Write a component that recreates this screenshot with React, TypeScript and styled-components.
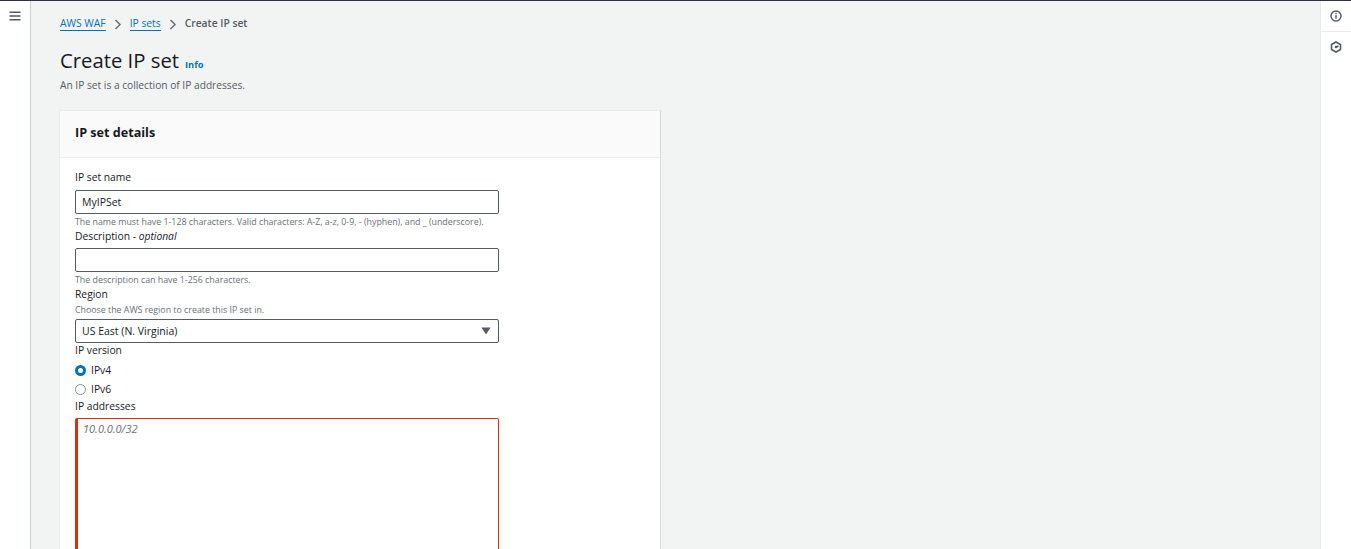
import React from "react";
import styled, { createGlobalStyle } from "styled-components";

const Global = createGlobalStyle`
  html, body { margin: 0; padding: 0; height: 100%; overflow: hidden; background: #f2f3f3; }
  body { font-family: "Open Sans", "Noto Sans", "Liberation Sans", sans-serif; color: #16191f; }
  #root { height: 100%; }
`;

const Page = styled.div`
  height: 549px;
  display: flex;
  flex-direction: column;
  overflow: hidden;
`;
const TopLine = styled.div`
  height: 1px;
  flex: none;
  background: #2a3342;
`;
const Body = styled.div`
  flex: 1;
  min-height: 0;
  display: flex;
`;
const LeftRail = styled.nav`
  width: 31px;
  flex: none;
  box-sizing: border-box;
  background: #fff;
  border-right: 1px solid #c8cfcf;
  padding: 10px 0 0 9px;
  svg { display: block; }
`;
const Main = styled.main`
  flex: 1;
  min-width: 0;
  padding: 14px 0 0 29px;
`;
const RightRail = styled.aside`
  width: 31px;
  flex: none;
  box-sizing: border-box;
  background: #fff;
  border-left: 1px solid #eaeded;
`;
const RailButton = styled.div`
  height: 30px;
  display: flex;
  align-items: center;
  justify-content: center;
  padding-right: 1px;
  &:first-child { border-bottom: 1px solid #eaeded; }
`;
const Crumbs = styled.div`
  display: flex;
  align-items: center;
  height: 16px;
  font-size: 10.3px;
  line-height: 16px;
  font-weight: 400;
`;
const CrumbLink = styled.a`
  color: #0073bb;
  border-bottom: 1px solid #0073bb;
  line-height: 14px;
  margin-top: 1px;
`;
const CrumbCurrent = styled.span`
  color: #545b64;
  font-weight: 600;
`;
const Sep = styled.svg`
  width: 8px;
  height: 11px;
  margin: 2px 8px 0;
  flex: none;
`;
const TitleRow = styled.div`
  margin-top: 13px;
  display: flex;
  align-items: baseline;
  gap: 6px;
`;
const Title = styled.h1`
  margin: 0;
  font-size: 20.3px;
  line-height: 32px;
  font-weight: 400;
  color: #16191f;
`;
const InfoLink = styled.a`
  font-size: 9.3px;
  font-weight: 700;
  color: #0073bb;
`;
const Subtitle = styled.p`
  margin: 2px 0 0;
  font-size: 10.2px;
  line-height: 14px;
  color: #545b64;
`;
const Card = styled.section`
  margin: 18px 0 0 -1px;
  width: 602px;
  box-sizing: border-box;
  background: #fff;
  border-right: 1px solid #d5dbdb;
  border-left: 1px solid #eaeded;
  border-top: 1px solid #eaeded;
`;
const CardHeader = styled.header`
  height: 47px;
  box-sizing: border-box;
  background: #fafafa;
  border-bottom: 1px solid #eaeded;
  padding: 13px 15px 0;
`;
const CardTitle = styled.h2`
  margin: 0;
  font-size: 12.6px;
  line-height: 18px;
  font-weight: 700;
`;
const CardBody = styled.div`
  padding: 11px 15px 0;
  width: 424px;
`;
const Label = styled.div<{ $tight?: boolean }>`
  font-size: 10.3px;
  line-height: ${(p) => (p.$tight ? 14 : 16)}px;
  color: #16191f;
`;
const Optional = styled.em`
  font-style: italic;
`;
const Hint = styled.div<{ $top?: number }>`
  margin-top: ${(p) => p.$top ?? 0}px;
  font-size: 8.84px;
  line-height: 12px;
  color: #687078;
  white-space: nowrap;
`;
const Control = styled.div<{ $top: number; $bottom?: number }>`
  margin-top: ${(p) => p.$top}px;
  margin-bottom: ${(p) => p.$bottom ?? 2}px;
  height: 24px;
  box-sizing: border-box;
  border: 1px solid #545b64;
  border-radius: 2px;
  padding: 0 6px;
  display: flex;
  align-items: center;
  justify-content: space-between;
  font-size: 10.5px;
  background: #fff;
`;
const Caret = styled.svg`
  width: 10px;
  height: 8px;
  margin-right: 1px;
`;
const RadioGroup = styled.div`
  margin-top: 3px;
`;
const RadioRow = styled.label`
  display: flex;
  align-items: center;
  gap: 5px;
  height: 19px;
  font-size: 10.3px;
  color: #16191f;
`;
const RadioDot = styled.span<{ $on?: boolean }>`
  width: 11px;
  height: 11px;
  border-radius: 50%;
  box-sizing: border-box;
  border: ${(p) => (p.$on ? "3.5px solid #0073bb" : "1px solid #879596")};
  background: #fff;
  margin-top: 2px;
`;
const AddressArea = styled.div`
  margin-top: 4px;
  height: 200px;
  box-sizing: border-box;
  border: 1px solid #d13212;
  border-left-width: 3px;
  border-radius: 2px;
  padding: 2px 5px;
  font-size: 11px;
  line-height: 16px;
  font-style: italic;
  color: #687078;
`;

export default function App() {
  return (
    <Page>
      <Global />
      <TopLine />
      <Body>
        <LeftRail>
          <svg width="12" height="10" viewBox="0 0 12 10" fill="none" stroke="#545b64" strokeWidth="1.6">
            <path d="M.5 1.200h11M.5 5h11M.5 8.800h11" />
          </svg>
        </LeftRail>
        <Main>
          <Crumbs>
            <CrumbLink>AWS WAF</CrumbLink>
            <Sep viewBox="0 0 8 11" fill="none" stroke="#687078" strokeWidth="1.5">
              <path d="M1.500 1l4.500 4.500L1.500 10" />
            </Sep>
            <CrumbLink>IP sets</CrumbLink>
            <Sep viewBox="0 0 8 11" fill="none" stroke="#687078" strokeWidth="1.5">
              <path d="M1.500 1l4.500 4.500L1.500 10" />
            </Sep>
            <CrumbCurrent>Create IP set</CrumbCurrent>
          </Crumbs>
          <TitleRow>
            <Title>Create IP set</Title>
            <InfoLink>Info</InfoLink>
          </TitleRow>
          <Subtitle>An IP set is a collection of IP addresses.</Subtitle>
          <Card>
            <CardHeader>
              <CardTitle>IP set details</CardTitle>
            </CardHeader>
            <CardBody>
              <Label>IP set name</Label>
              <Control $top={5}>MyIPSet</Control>
              <Hint>The name must have 1-128 characters. Valid characters: A-Z, a-z, 0-9, - (hyphen), and _ (underscore).</Hint>
              <Label>
                Description - <Optional>optional</Optional>
              </Label>
              <Control $top={4} />
              <Hint>The description can have 1-256 characters.</Hint>
              <Label>Region</Label>
              <Hint $top={2}>Choose the AWS region to create this IP set in.</Hint>
              <Control $top={3} $bottom={0}>
                US East (N. Virginia)
                <Caret viewBox="0 0 10 8">
                  <path d="M.5 .5h9L5 7.500z" fill="#545b64" />
                </Caret>
              </Control>
              <Label $tight>IP version</Label>
              <RadioGroup>
                <RadioRow>
                  <RadioDot $on />
                  IPv4
                </RadioRow>
                <RadioRow>
                  <RadioDot />
                  IPv6
                </RadioRow>
              </RadioGroup>
              <Label>IP addresses</Label>
              <AddressArea>10.0.0.0/32</AddressArea>
            </CardBody>
          </Card>
        </Main>
        <RightRail>
          <RailButton>
            <svg width="12" height="12" viewBox="0 0 12 12" fill="none" stroke="#545b64" strokeWidth="1.4">
              <circle cx="6" cy="6" r="5" />
              <path d="M6 5.200v3.600M6 2.800v1.400" />
            </svg>
          </RailButton>
          <RailButton>
            <svg width="12" height="12" viewBox="0 0 12 12" fill="none" stroke="#545b64" strokeWidth="1.600">
              <path d="M6 1l4.500 2.500v5L6 11 1.500 8.500v-5z" />
              <circle cx="6" cy="6" r="1.300" fill="#545b64" stroke="none" />
              <path d="M6 6l2.500-1" />
            </svg>
          </RailButton>
        </RightRail>
      </Body>
    </Page>
  );
}
